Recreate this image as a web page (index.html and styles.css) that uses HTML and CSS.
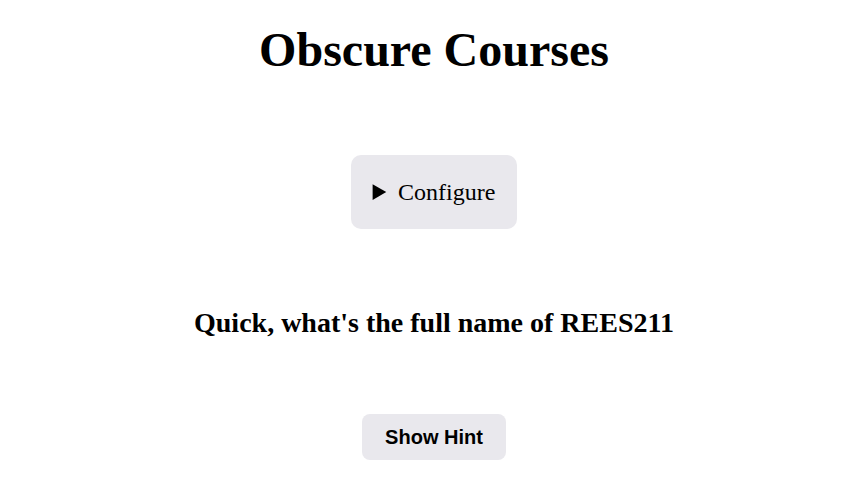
FILE: index.html
```html
<!DOCTYPE html>
<html>
<head>
<meta charset="utf-8">
<link rel="stylesheet" href="styles.css">
</head>
<body>
<main class="page">
  <h1 class="title">Obscure Courses</h1>
  <details class="config">
    <summary class="config-summary">Configure</summary>
  </details>
  <h2 class="question">Quick, what's the full name of REES211</h2>
  <button class="hint-btn">Show Hint</button>
</main>
</body>
</html>
```
FILE: styles.css
```css
html, body {
  margin: 0;
  padding: 0;
  background: #ffffff;
}
body {
  font-family: "Liberation Serif", "Times New Roman", serif;
  color: #000;
}
.page {
  display: flex;
  flex-direction: column;
  align-items: center;
  padding-top: 22px;
  padding-left: 10px;
}
.title {
  font-size: 48px;
  font-weight: bold;
  margin: 0;
  line-height: 55px;
}
.config {
  margin-top: 78px;
  background: #e9e8ed;
  border-radius: 10px;
  padding: 24px 22px;
  font-size: 24px;
  line-height: 26px;
}
.config-summary {
  cursor: pointer;
}
.question {
  margin: 78px 0 0;
  font-size: 28px;
  line-height: 32px;
  font-weight: bold;
}
.hint-btn {
  margin-top: 75px;
  font-family: "Liberation Sans", Arial, sans-serif;
  font-weight: bold;
  font-size: 20px;
  line-height: 22px;
  padding: 12px 23px;
  border: none;
  border-radius: 8px;
  background: #e9e8ed;
  color: #000;
}
```
